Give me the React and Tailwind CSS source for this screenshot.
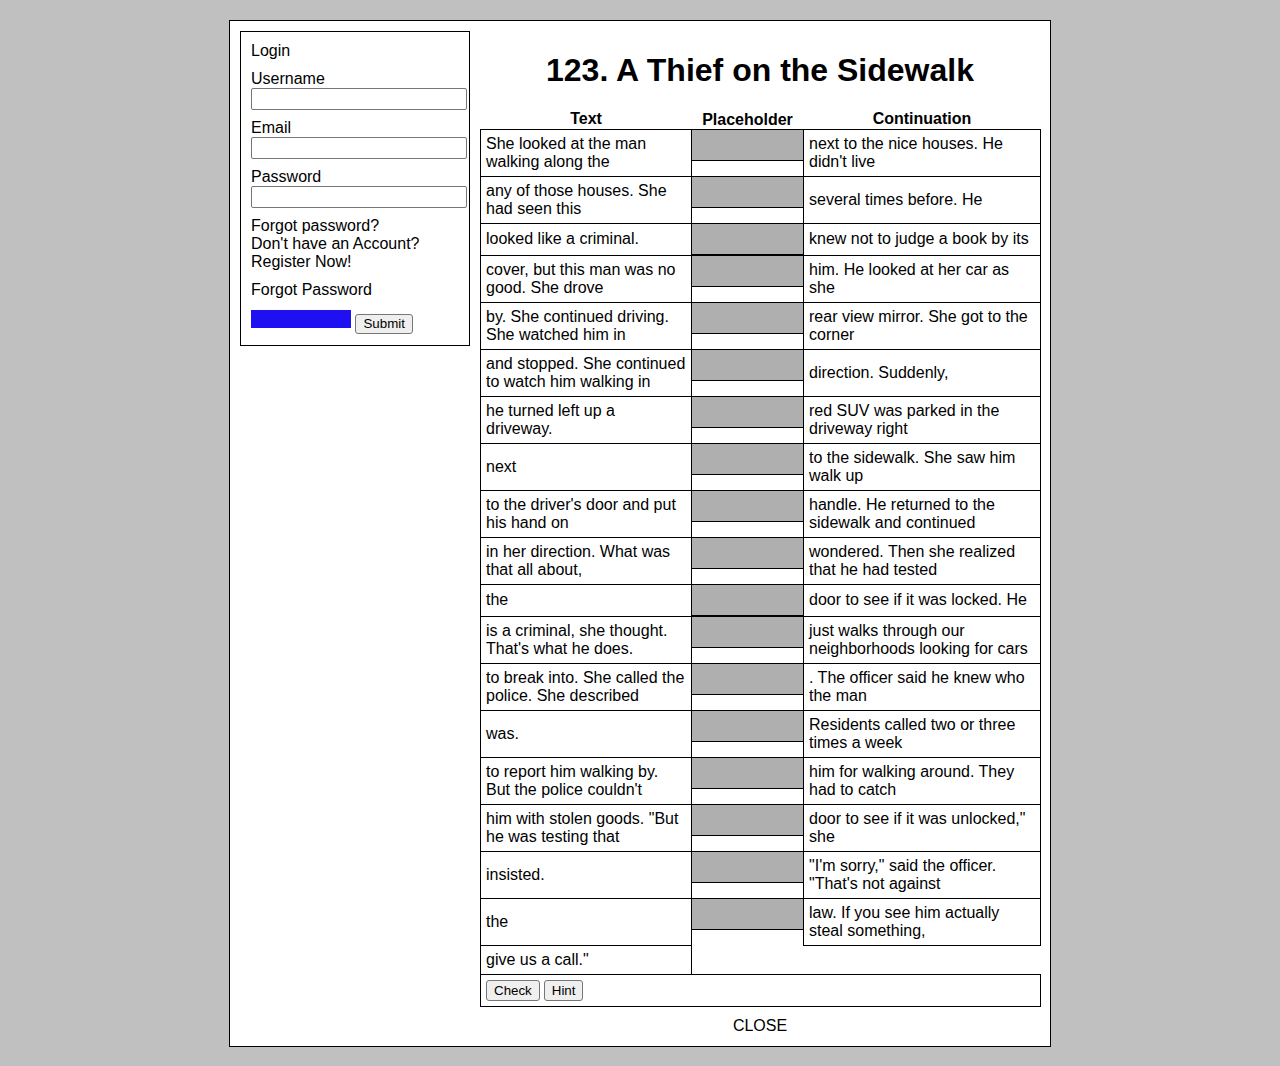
const rows = [
  ['She looked at the man walking along the', 'next to the nice houses. He didn\'t live'],
  ['any of those houses. She had seen this', 'several times before. He'],
  ['looked like a criminal.', 'knew not to judge a book by its'],
  ['cover, but this man was no good. She drove', 'him. He looked at her car as she'],
  ['by. She continued driving. She watched him in', 'rear view mirror. She got to the corner'],
  ['and stopped. She continued to watch him walking in', 'direction. Suddenly,'],
  ['he turned left up a driveway.', 'red SUV was parked in the driveway right', true],
  ['next', 'to the sidewalk. She saw him walk up'],
  ['to the driver\'s door and put his hand on', 'handle. He returned to the sidewalk and continued'],
  ['in her direction. What was that all about,', 'wondered. Then she realized that he had tested'],
  ['the', 'door to see if it was locked. He'],
  ['is a criminal, she thought. That\'s what he does.', 'just walks through our neighborhoods looking for cars'],
  ['to break into. She called the police. She described', '. The officer said he knew who the man'],
  ['was.', 'Residents called two or three times a week'],
  ['to report him walking by. But the police couldn\'t', 'him for walking around. They had to catch'],
  ['him with stolen goods. "But he was testing that', 'door to see if it was unlocked," she'],
  ['insisted.', '"I\'m sorry," said the officer. "That\'s not against'],
  ['the', 'law. If you see him actually steal something,'],
];

const cell = 'border border-black p-[5px] align-middle text-left leading-[normal]';
// this one wraps a little earlier in the original rendering
const cellTight = 'border border-black py-[5px] pl-[5px] pr-[10px] align-middle text-left leading-[normal]';
const btn = 'h-[20px] border border-[#767676] bg-[#efefef] rounded-[3px] px-[7px] py-0 text-[13.33px] leading-[normal] text-black';
const btnTall = 'h-[21px] border border-[#767676] bg-[#efefef] rounded-[3px] px-[7px] py-0 text-[13.33px] leading-[normal] text-black';
const input = 'block w-[216px] h-[22px] border border-[#767676] rounded-[2px] bg-white';

const LoginBox = () => (
  <div className="w-[230px] shrink-0 self-start border border-black px-[10px] pt-[10px] pb-[11px] leading-[normal]">
    <div>Login</div>
    <div className="mt-[10px]">Username</div>
    <input type="text" className={input} />
    <div className="mt-[9px]">Email</div>
    <input type="text" className={input} />
    <div className="mt-[9px]">Password</div>
    <input type="password" className={input} />
    <div className="mt-[9px]">
      Forgot password?
      <br />
      Don't have an Account?
      <br />
      Register Now!
    </div>
    <div className="mt-[10px]">Forgot Password</div>
    <div className="mt-[11px]">
      <span className="inline-block w-[100px] h-[18px] bg-[#1f10f2]"></span>{' '}
      <button className={btn}>Submit</button>
    </div>
  </div>
);

export default function App() {
  return (
    <div className="min-h-[1066px] bg-[#c0c0c0] py-[20px] font-['Liberation_Sans',Arial,sans-serif] text-[16px] text-black">
      <div className="mx-auto flex w-[822px] gap-[10px] border border-black bg-white p-[10px]">
        <LoginBox />
        <div className="w-[560px]">
          <h1 className="my-[21px] text-center text-[32px] font-bold leading-[normal]">
            123. A Thief on the Sidewalk
          </h1>
          <table className="w-[560px] table-fixed border-collapse">
            <colgroup>
              <col className="w-[211px]" />
              <col className="w-[112px]" />
              <col className="w-[237px]" />
            </colgroup>
            <thead>
              <tr>
                <th className="text-center font-bold leading-[normal]">Text</th>
                <th className="pt-[1px] text-center font-bold leading-[normal]">Placeholder</th>
                <th className="text-center font-bold leading-[normal]">Continuation</th>
              </tr>
            </thead>
            <tbody>
              {rows.map(([text, cont, tight], i) => (
                <tr key={i}>
                  <td className={tight ? cellTight : cell}>{text}</td>
                  <td className="p-0 align-top">
                    <div className="h-[32px] border-y border-black bg-[#afafaf]"></div>
                  </td>
                  <td className={cell}>{cont}</td>
                </tr>
              ))}
              <tr>
                <td className={cell}>give us a call."</td>
                <td></td>
                <td></td>
              </tr>
              <tr>
                <td colSpan={3} className="border border-black p-[5px]">
                  <div className="flex gap-[4px]">
                    <button className={btnTall}>Check</button>
                    <button className={btnTall}>Hint</button>
                  </div>
                </td>
              </tr>
            </tbody>
          </table>
          <div className="mt-[10px] h-[19px] text-center leading-[normal]">CLOSE</div>
        </div>
      </div>
    </div>
  );
}
